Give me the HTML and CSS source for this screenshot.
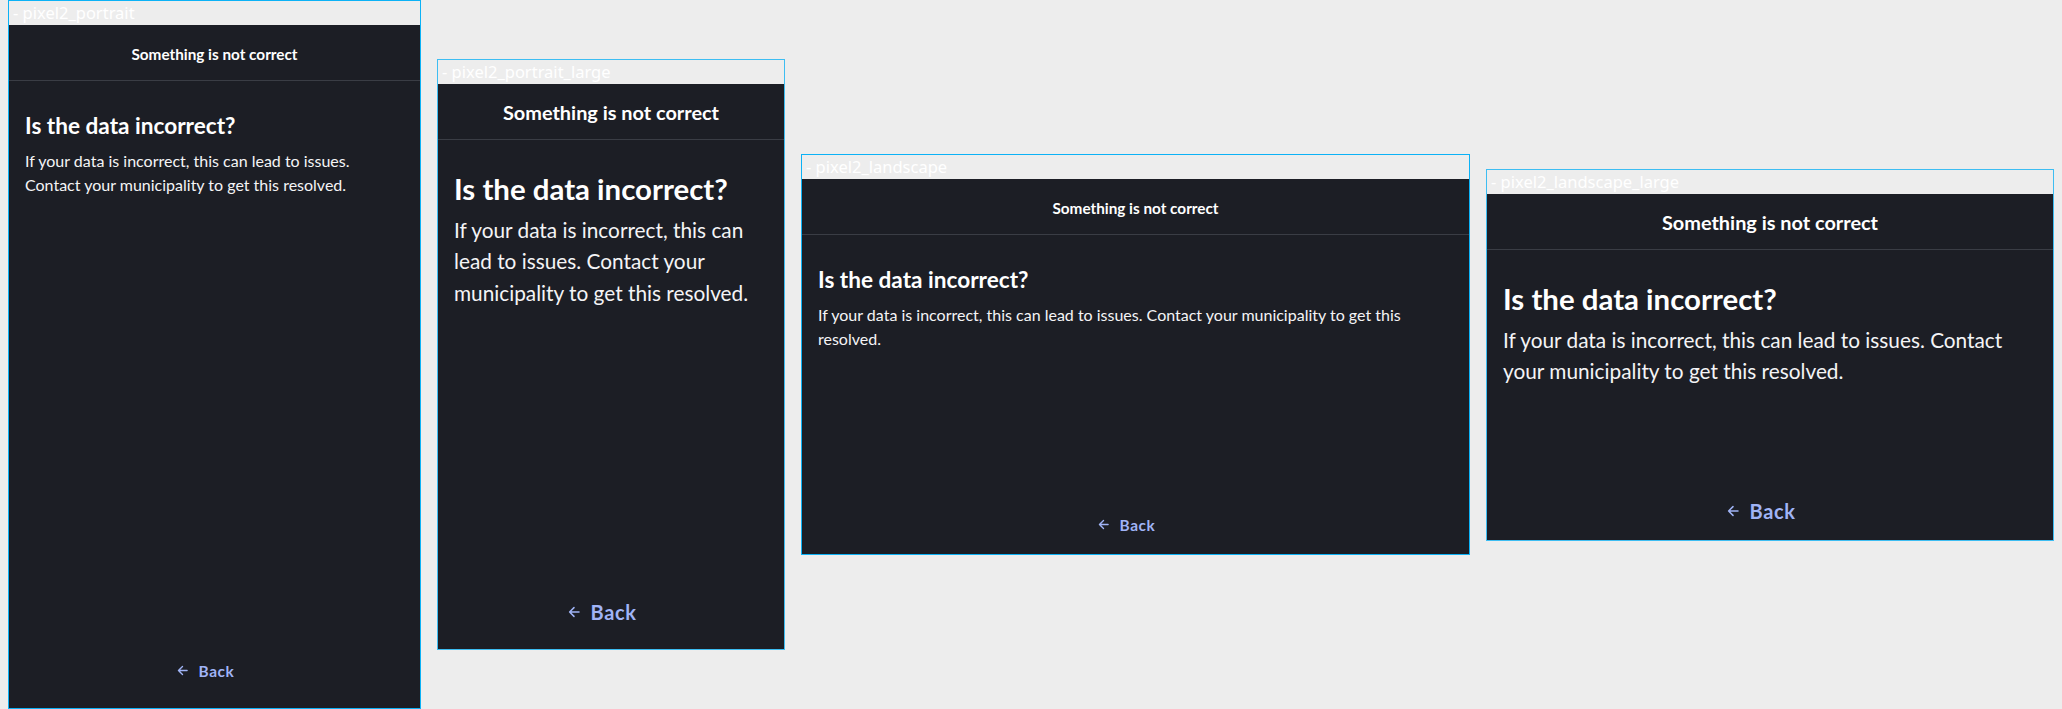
FILE: index.html
```html
<!DOCTYPE html>
<html lang="en">
<head>
<meta charset="utf-8">
<title>Golden screenshots</title>
<link rel="stylesheet" href="styles.css">
</head>
<body>
<main class="board">

  <section class="device device--portrait">
    <div class="device__label">- pixel2_portrait</div>
    <div class="screen">
      <header class="screen__bar"><h1 class="screen__title">Something is not correct</h1></header>
      <div class="screen__content">
        <h2 class="screen__heading">Is the data incorrect?</h2>
        <p class="screen__body">If your data is incorrect, this can lead to issues. Contact your municipality to get this resolved.</p>
      </div>
      <footer class="screen__footer">
        <button class="back" type="button">
          <svg class="back__icon" viewBox="0 0 12 12" aria-hidden="true"><path d="M11 6H1.6M6 1.6L1.6 6L6 10.4"/></svg>
          <span class="back__text">Back</span>
        </button>
      </footer>
    </div>
  </section>

  <section class="device device--portrait device--large">
    <div class="device__label">- pixel2_portrait_large</div>
    <div class="screen">
      <header class="screen__bar"><h1 class="screen__title">Something is not correct</h1></header>
      <div class="screen__content">
        <h2 class="screen__heading">Is the data incorrect?</h2>
        <p class="screen__body">If your data is incorrect, this can lead to issues. Contact your municipality to get this resolved.</p>
      </div>
      <footer class="screen__footer">
        <button class="back" type="button">
          <svg class="back__icon" viewBox="0 0 12 12" aria-hidden="true"><path d="M11 6H1.6M6 1.6L1.6 6L6 10.4"/></svg>
          <span class="back__text">Back</span>
        </button>
      </footer>
    </div>
  </section>

  <section class="device device--landscape">
    <div class="device__label">- pixel2_landscape</div>
    <div class="screen">
      <header class="screen__bar"><h1 class="screen__title">Something is not correct</h1></header>
      <div class="screen__content">
        <h2 class="screen__heading">Is the data incorrect?</h2>
        <p class="screen__body">If your data is incorrect, this can lead to issues. Contact your municipality to get this resolved.</p>
      </div>
      <footer class="screen__footer">
        <button class="back" type="button">
          <svg class="back__icon" viewBox="0 0 12 12" aria-hidden="true"><path d="M11 6H1.6M6 1.6L1.6 6L6 10.4"/></svg>
          <span class="back__text">Back</span>
        </button>
      </footer>
    </div>
  </section>

  <section class="device device--landscape device--large">
    <div class="device__label">- pixel2_landscape_large</div>
    <div class="screen">
      <header class="screen__bar"><h1 class="screen__title">Something is not correct</h1></header>
      <div class="screen__content">
        <h2 class="screen__heading">Is the data incorrect?</h2>
        <p class="screen__body">If your data is incorrect, this can lead to issues. Contact your municipality to get this resolved.</p>
      </div>
      <footer class="screen__footer">
        <button class="back" type="button">
          <svg class="back__icon" viewBox="0 0 12 12" aria-hidden="true"><path d="M11 6H1.6M6 1.6L1.6 6L6 10.4"/></svg>
          <span class="back__text">Back</span>
        </button>
      </footer>
    </div>
  </section>

</main>
</body>
</html>
```
FILE: styles.css
```css
* { box-sizing: border-box; }

html, body {
  margin: 0;
  padding: 0;
  background: #ededed;
}

body {
  font-family: Lato, "Noto Sans", sans-serif;
  color: #ffffff;
}

.board {
  height: 709px;
  display: flex;
  align-items: center;
  gap: 16px;
  padding-left: 8px;
}

/* ---------- device frame ---------- */
.device {
  --title-size: 15.3px;
  --heading-size: 22.6px;
  --body-size: 16px;
  --body-lh: 24px;
  --back-size: 15.4px;
  --arrow-size: 11px;
  --footer-pad: 13px;
  --heading-gap: 9px;
  flex: none;
  display: flex;
  flex-direction: column;
  border: 1px solid #0cb2f6;
  background: #ededed;
}

.device--large {
  --title-size: 19.9px;
  --heading-size: 29.4px;
  --body-size: 20.8px;
  --body-lh: 31.2px;
  --back-size: 20px;
  --arrow-size: 12px;
  --heading-gap: 7.5px;
  border-color: #3dbdf2;
}

.device--portrait { width: 413px; height: 709px; }
.device--portrait.device--large { width: 348px; height: 591px; }
.device--landscape { width: 669px; height: 401px; --footer-pad: 5px; }
.device--landscape.device--large { width: 568px; height: 372px; }

.device__label {
  flex: none;
  height: 24px;
  padding-left: 4px;
  font-family: "Noto Sans", "Open Sans", sans-serif;
  font-size: 16.5px;
  line-height: 24px;
  color: #ffffff;
  white-space: nowrap;
  overflow: hidden;
}

/* ---------- app screen ---------- */
.screen {
  flex: 1;
  min-height: 0;
  display: flex;
  flex-direction: column;
  background: #1c1e25;
  overflow: hidden;
}

.screen__bar {
  flex: none;
  height: 56px;
  padding-top: 3px;
  display: flex;
  align-items: center;
  justify-content: center;
  border-bottom: 1px solid #3a3d45;
}

.screen__title {
  margin: 0;
  font-size: var(--title-size);
  font-weight: 700;
  line-height: 1.2;
}

.screen__content {
  flex: 1;
  padding: 31.4px 20px 0 16px;
}

.screen__heading {
  margin: 0 0 var(--heading-gap);
  font-size: var(--heading-size);
  font-weight: 700;
  line-height: 1.2;
}

.screen__body {
  margin: 0;
  font-size: var(--body-size);
  line-height: var(--body-lh);
  color: #f4f4f6;
}

.screen__footer {
  flex: none;
  height: calc(48px + var(--footer-pad));
  padding-bottom: var(--footer-pad);
  display: flex;
  align-items: center;
  justify-content: center;
}

.back {
  display: flex;
  align-items: center;
  gap: 11px;
  margin: 0 18px 0 0;
  padding: 0;
  border: 0;
  background: none;
  color: #a0b4f6;
  font-family: Lato, "Noto Sans", sans-serif;
  font-size: var(--back-size);
  font-weight: 700;
  letter-spacing: 0.6px;
  line-height: 1.2;
  cursor: pointer;
}

.back__icon {
  width: var(--arrow-size);
  height: var(--arrow-size);
  fill: none;
  stroke: currentColor;
  stroke-width: 1.5;
  stroke-linecap: round;
  stroke-linejoin: round;
}
```
